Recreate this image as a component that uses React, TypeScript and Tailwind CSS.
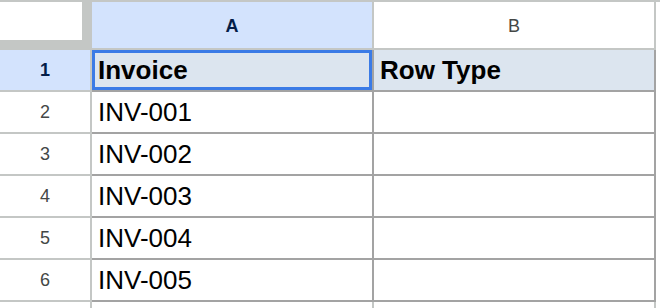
import React from "react"

// Small spreadsheet view: frozen corner, column headers A/B, six rows.

const ROWS = ["INV-001", "INV-002", "INV-003", "INV-004", "INV-005"]

const font = "font-['Liberation_Sans',Arial,sans-serif]"

function RowHeader({ n, active }: { n: number | string; active?: boolean }) {
  return (
    <div
      className={`flex h-full w-[92px] shrink-0 items-center justify-center border-r-2 border-b-2 border-[#c4c7c5] text-[18px] ${
        active ? "bg-[#d3e3fd] font-bold text-[#041e49]" : "bg-white text-[#444746]"
      }`}
    >
      {n}
    </div>
  )
}

export default function App() {
  return (
    <div className={`h-[308px] w-[660px] overflow-hidden bg-white ${font}`}>
      {/* ── Column headers ── */}
      <div className="flex h-[50px] border-t-2 border-[#c4c7c5]">
        <div className="h-full w-[92px] shrink-0 bg-[#c4c7c5]">
          <div className="h-[38px] w-[82px] bg-white" />
        </div>
        <div className="flex h-full w-[282px] shrink-0 items-center justify-center border-r-2 border-b-2 border-[#c4c7c5] bg-[#d3e3fd] pt-[2px] text-[18px] font-bold text-[#041e49]">
          A
        </div>
        <div className="flex h-full w-[282px] shrink-0 items-center justify-center border-r-2 border-b-2 border-[#c4c7c5] bg-white pt-[2px] text-[18px] text-[#444746]">
          B
        </div>
      </div>

      {/* ── Row 1 (header row of the data) ── */}
      <div className="flex h-[42px]">
        <RowHeader n={1} active />
        <div className="flex h-full w-[282px] shrink-0 items-center border-r-2 border-b-2 border-[#a3a3a3] bg-[#dce5ef] pl-[6px] text-[26px] font-bold text-black shadow-[inset_0_0_0_3px_#3b7be6]">
          Invoice
        </div>
        <div className="flex h-full w-[282px] shrink-0 items-center border-r-2 border-b-2 border-[#a3a3a3] bg-[#dce5ef] pl-[6px] text-[26px] font-bold text-black">
          Row Type
        </div>
      </div>

      {/* ── Data rows ── */}
      {ROWS.map((inv, i) => (
        <div key={inv} className="flex h-[42px]">
          <RowHeader n={i + 2} />
          <div className="flex h-full w-[282px] shrink-0 items-center border-r-2 border-b-2 border-[#a3a3a3] pl-[6px] text-[26px] text-black">
            {inv}
          </div>
          <div className="h-full w-[282px] shrink-0 border-r-2 border-b-2 border-[#a3a3a3]" />
        </div>
      ))}

      {/* ── Row 7, cut off ── */}
      <div className="flex h-[42px]">
        <div className="h-full w-[92px] shrink-0 border-r-2 border-[#c4c7c5]" />
        <div className="h-full w-[282px] shrink-0 border-r-2 border-[#c4c7c5]" />
        <div className="h-full w-[282px] shrink-0 border-r-2 border-[#c4c7c5]" />
      </div>
    </div>
  )
}
